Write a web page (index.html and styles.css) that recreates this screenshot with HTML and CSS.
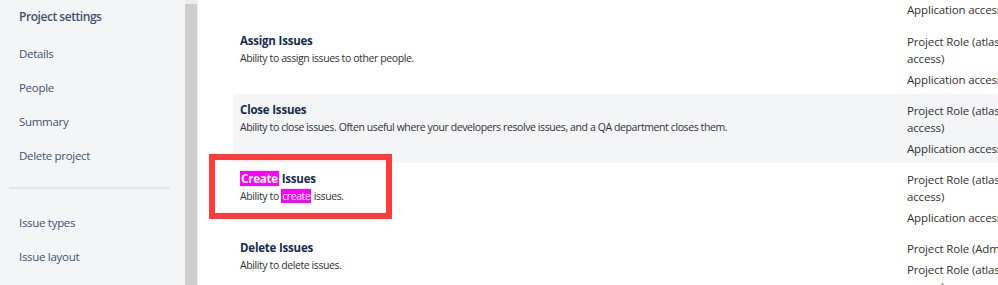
FILE: index.html
```html
<!DOCTYPE html>
<html lang="en">
<head>
<meta charset="utf-8">
<title>Project settings – Permissions</title>
<link rel="stylesheet" href="styles.css">
</head>
<body>
<div class="page">
  <nav class="sidebar">
    <div class="side-title">Project settings</div>
    <ul class="side-group">
      <li class="side-item">Details</li>
      <li class="side-item">People</li>
      <li class="side-item">Summary</li>
      <li class="side-item">Delete project</li>
    </ul>
    <div class="side-divider"></div>
    <ul class="side-group">
      <li class="side-item">Issue types</li>
      <li class="side-item">Issue layout</li>
    </ul>
  </nav>
  <div class="scrollbar"><div class="thumb"></div></div>
  <main class="content">
    <div class="perm-table">
      <div class="perm-row stub">
        <div class="perm-info"></div>
        <ul class="grants">
          <li class="grant">Application access</li>
        </ul>
      </div>
      <div class="perm-row">
        <div class="perm-info">
          <div class="perm-name">Assign Issues</div>
          <div class="perm-desc">Ability to assign issues to other people.</div>
        </div>
        <ul class="grants">
          <li class="grant">Project Role (atlassian-addons-project-<br>access)</li>
          <li class="grant">Application access</li>
        </ul>
      </div>
      <div class="perm-row alt">
        <div class="perm-info">
          <div class="perm-name">Close Issues</div>
          <div class="perm-desc">Ability to close issues. Often useful where your developers resolve issues, and a QA department closes them.</div>
        </div>
        <ul class="grants">
          <li class="grant">Project Role (atlassian-addons-project-<br>access)</li>
          <li class="grant">Application access</li>
        </ul>
      </div>
      <div class="perm-row">
        <div class="perm-info">
          <div class="perm-name"><mark class="hl">Create</mark> Issues</div>
          <div class="perm-desc">Ability to <mark class="hl">create</mark> issues.</div>
        </div>
        <ul class="grants">
          <li class="grant">Project Role (atlassian-addons-project-<br>access)</li>
          <li class="grant">Application access</li>
        </ul>
      </div>
      <div class="perm-row">
        <div class="perm-info">
          <div class="perm-name">Delete Issues</div>
          <div class="perm-desc">Ability to delete issues.</div>
        </div>
        <ul class="grants">
          <li class="grant">Project Role (Administrators)</li>
          <li class="grant">Project Role (atlassian-addons-project-<br>access)</li>
        </ul>
      </div>
    </div>
    <div class="annotation"></div>
  </main>
</div>
</body>
</html>
```
FILE: styles.css
```css
* { box-sizing: border-box; }
html, body { margin: 0; padding: 0; }
body {
  width: 998px;
  height: 285px;
  overflow: hidden;
  background: #fff;
  font-family: "Open Sans", "Noto Sans", "Liberation Sans", sans-serif;
}
.page {
  display: flex;
  height: 285px;
}
.sidebar {
  width: 185px;
  flex: none;
  background: #f4f5f7;
  color: #42526e;
}
.side-title {
  padding-left: 19px;
  line-height: 34px;
  height: 37px;
  font-size: 12px;
  font-weight: 600;
  letter-spacing: -0.45px;
  color: #42526e;
}
.side-group {
  list-style: none;
  margin: 0;
  padding: 0;
}
.side-item {
  padding-left: 19px;
  line-height: 34px;
  font-size: 11.5px;
  letter-spacing: -0.3px;
}
.side-divider {
  height: 2px;
  background: #e3e5e9;
  margin: 14px 15px 17px 9px;
}
.scrollbar {
  width: 13px;
  flex: none;
  background: #ececec;
  padding-top: 4px;
}
.thumb {
  width: 12px;
  height: 100%;
  background: #cdcdcd;
}
.content {
  position: relative;
  flex: 1;
  min-width: 0;
  padding-left: 35px;
}
.perm-table {
  display: flex;
  flex-direction: column;
}
.perm-row {
  display: grid;
  grid-template-columns: 667px 1fr;
  padding: 8px 7px 6px;
  white-space: nowrap;
}
.perm-row.stub {
  padding: 1px 7px 7px;
}
.perm-row.alt {
  background: #f4f5f7;
}
.perm-name {
  font-size: 11.5px;
  font-weight: 700;
  line-height: 16px;
  letter-spacing: -0.2px;
  color: #172b4d;
}
.perm-desc {
  font-size: 10.5px;
  line-height: 18px;
  letter-spacing: -0.4px;
  color: #333;
}
.grants {
  list-style: none;
  margin: 0;
  padding: 0;
  display: flex;
  flex-direction: column;
  gap: 4px;
}
.grant {
  font-size: 11.5px;
  line-height: 17px;
  letter-spacing: -0.15px;
  color: #333;
}
.hl {
  background: #ff00ff;
  color: #fff;
  padding: 0 1px;
}
.annotation {
  position: absolute;
  left: 11px;
  top: 154px;
  width: 183px;
  height: 65px;
  border: 6px solid #ff3b3b;
  pointer-events: none;
}
```
